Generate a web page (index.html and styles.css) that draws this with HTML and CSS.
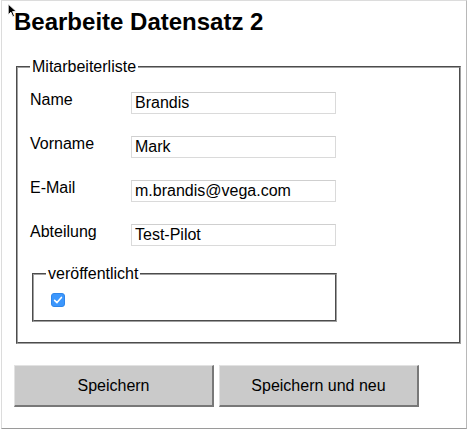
FILE: index.html
```html
<!DOCTYPE html>
<html lang="de">
<head>
<meta charset="utf-8">
<title>Bearbeite Datensatz 2</title>
<link rel="stylesheet" href="styles.css">
</head>
<body>
<div class="panel">
  <svg class="cursor" width="11" height="15" viewBox="0 0 10 14"><path d="M1 1 L1 11 L3.5 8.6 L5.3 12.8 L6.9 12.1 L5.1 8 L8.6 8 Z" fill="#000" stroke="#fff" stroke-width="0.8"/></svg>
  <h1 class="title">Bearbeite Datensatz 2</h1>
  <form class="form">
    <fieldset class="outer">
      <legend class="legend">Mitarbeiterliste</legend>
      <div class="row"><label class="label" for="f1">Name</label><input class="field" id="f1" type="text" value="Brandis"></div>
      <div class="row"><label class="label" for="f2">Vorname</label><input class="field" id="f2" type="text" value="Mark"></div>
      <div class="row"><label class="label" for="f3">E-Mail</label><input class="field" id="f3" type="text" value="m.brandis@vega.com"></div>
      <div class="row"><label class="label" for="f4">Abteilung</label><input class="field" id="f4" type="text" value="Test-Pilot"></div>
      <fieldset class="inner">
        <legend class="legend">veröffentlicht</legend>
        <span class="check"><input class="box" type="checkbox" checked><svg class="tick" width="14" height="14" viewBox="0 0 14 14"><path d="M3.6 7.3 L6 9.6 L10.4 4.4" fill="none" stroke="#fff" stroke-width="1.6" stroke-linecap="round" stroke-linejoin="round"/></svg></span>
      </fieldset>
    </fieldset>
    <div class="buttons">
      <button class="btn" type="button">Speichern</button>
      <button class="btn" type="button">Speichern und neu</button>
    </div>
  </form>
</div>
</body>
</html>
```
FILE: styles.css
```css
html, body {
  margin: 0;
  padding: 0;
  background: #fff;
}
body {
  font-family: "Liberation Sans", Arial, Helvetica, sans-serif;
  color: #000;
}
.panel {
  position: relative;
  box-sizing: border-box;
  margin-left: 1px;
  width: 466px;
  height: 429px;
  border: 1px solid #dcdcdc;
  border-right-color: #b8b8b8;
  border-bottom-color: #9a9a9a;
  padding: 7px 12px 0 12px;
}
.cursor {
  position: absolute;
  left: 5px;
  top: 2px;
}
.title {
  margin: 0;
  font-size: 24px;
  line-height: 28px;
  font-weight: bold;
}
.form {
  margin: 0;
}
.outer {
  margin: 22px 2px 0 2px;
  width: 445px;
  box-sizing: border-box;
  border: 2px groove #a0a0a0;
  padding: 15px 12px 20px 12px;
}
.legend {
  padding: 0 2px;
  font-size: 16px;
  line-height: 18px;
}
.row {
  display: flex;
  align-items: flex-start;
  margin-bottom: 21px;
}
.label {
  width: 101px;
  flex: none;
  font-size: 16px;
  line-height: 18px;
}
.field {
  margin: 1px 0 0 0;
  box-sizing: border-box;
  width: 205px;
  height: 22px;
  border: 1px solid #dadada;
  border-top-color: #cfcfcf;
  padding: 1px 3px;
  font-family: "Liberation Sans", Arial, Helvetica, sans-serif;
  font-size: 16px;
  color: #000;
  background: #fff;
}
.row:last-of-type {
  margin-bottom: 19px;
}
.inner {
  margin: 0 2px;
  width: 305px;
  box-sizing: border-box;
  border: 2px groove #a0a0a0;
  padding: 10px 12px 13px 12px;
}
.check {
  position: relative;
  display: block;
  margin-left: 5px;
  width: 14px;
  height: 14px;
}
.box {
  appearance: none;
  -webkit-appearance: none;
  display: block;
  margin: 0;
  width: 14px;
  height: 14px;
  border-radius: 3px;
  background: #3c97fd;
  border: 1px solid #2f86ea;
  box-sizing: border-box;
}
.tick {
  position: absolute;
  left: 0;
  top: 0;
  pointer-events: none;
}
.buttons {
  display: flex;
  gap: 5px;
  margin-top: 21px;
}
.btn {
  box-sizing: border-box;
  width: 200px;
  height: 42px;
  background: #cacaca;
  border-style: solid;
  border-width: 1px 2px 2px 1px;
  border-color: #e2e2e2 #787878 #787878 #e2e2e2;
  font-family: "Liberation Sans", Arial, Helvetica, sans-serif;
  font-size: 16px;
  color: #000;
  padding: 0;
}
```
